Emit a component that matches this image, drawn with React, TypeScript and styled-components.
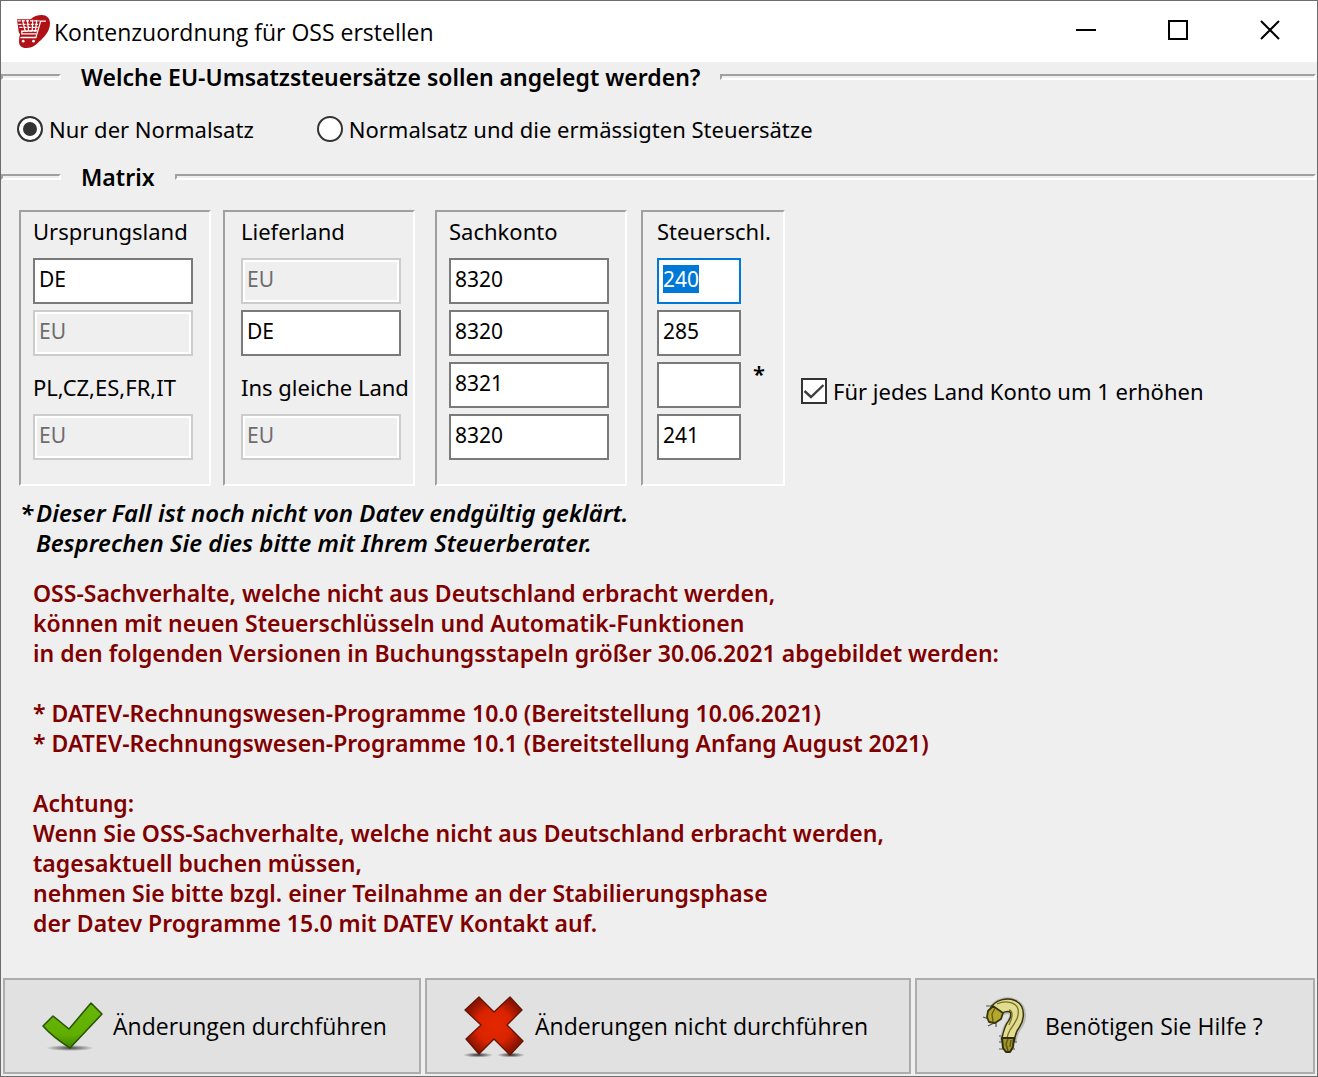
import React, { useEffect, useRef, useState } from 'react';
import styled, { createGlobalStyle } from 'styled-components';

const face = '#efefef';
const shadow = '#a0a0a0';
const uiFont = '"Noto Sans", "Open Sans", sans-serif';
const captionFont = '"Open Sans", "Noto Sans", sans-serif';

const GlobalStyle = createGlobalStyle`
  *, *::before, *::after { box-sizing: border-box; }
  body { margin: 0; background: ${face}; }
  button, input { font: inherit; color: inherit; margin: 0; }
`;

const Window = styled.main`
  display: flex;
  flex-direction: column;
  min-height: 100vh;
  border: 1px solid #6c6c6c;
  background: ${face};
  color: #000;
  font: 400 22px/30px ${uiFont};
`;

const TitleBar = styled.header`
  display: flex;
  align-items: center;
  height: 61px;
  padding: 0 1px 0 16px;
  background: #fff;
`;

const Title = styled.h1`
  flex: 1;
  margin: 0;
  padding-left: 4px;
  font: 400 23px/30px ${captionFont};
  white-space: nowrap;
`;

const CaptionButton = styled.button`
  display: grid;
  place-items: center;
  align-self: flex-start;
  width: 92px;
  height: 58px;
  padding: 0;
  border: 0;
  background: transparent;
`;

const SectionHeader = styled.h2`
  display: flex;
  align-items: center;
  gap: 20px;
  margin: 0;
  padding-right: 1px;
  font: 600 23px/30px ${uiFont};
  white-space: nowrap;

  &::before, &::after {
    content: '';
    height: 6px;
    border: 2px solid;
    border-color: ${shadow} #fff #fff ${shadow};
  }
  &::before { width: 60px; }
  &::after { flex: 1; }
`;

const RadioRow = styled.div`
  display: flex;
  gap: 63px;
  padding: 22px 16px 18px;
`;

const Choice = styled.label`
  display: flex;
  align-items: center;
  gap: 6px;
  white-space: nowrap;
`;

const Radio = styled.input`
  appearance: none;
  width: 26px;
  height: 26px;
  border: 2px solid #333;
  border-radius: 50%;
  background: #fff;
  &:checked { background: #333; box-shadow: inset 0 0 0 4px #fff; }
`;

const TickBox = styled.span`
  display: grid;
  & > * { grid-area: 1 / 1; }
  & > svg { pointer-events: none; visibility: hidden; }
  & > input:checked + svg { visibility: visible; }
`;

const Check = styled.input`
  appearance: none;
  width: 26px;
  height: 26px;
  border: 2px solid #333;
  background: #fff;
`;

const Matrix = styled.div`
  display: flex;
  align-items: flex-end;
  gap: 16px;
  padding: 18px 18px 0;
`;

const Panels = styled.div`
  display: grid;
  grid-template-columns: 204px 212px 206px 144px;
`;

const MatrixOption = styled.div`
  padding-bottom: 80px;
`;

const Panel = styled.div<{ $inset: number; $narrow?: boolean }>`
  display: flex;
  flex-direction: column;
  gap: 6px;
  width: ${p => (p.$narrow ? 144 : 192)}px;
  height: 276px;
  padding: 4px 0 0 ${p => p.$inset}px;
  border: 2px solid;
  border-color: ${shadow} #fff #fff ${shadow};
  white-space: nowrap;
`;

const PanelTitle = styled.div`
  margin-bottom: 6px;
`;

const Cell = styled.div`
  display: flex;
  gap: 12px;
  height: 46px;
`;

const CellText = styled.span`
  padding-top: 10px;
`;

const Star = styled.span`
  font-weight: 600;
  line-height: 22px;
`;

const Field = styled.input<{ $short?: boolean }>`
  width: ${p => (p.$short ? 84 : 160)}px;
  height: 46px;
  padding: 4px 4px 8px;
  border: 2px solid #7a7a7a;
  border-radius: 0;
  outline: 0;
  background: #fff;
  font-size: 21px;
  line-height: 30px;

  &:focus { border-color: #0078d7; }
  &::selection { background: #0078d7; color: #fff; }
  &:disabled {
    border-color: #ccc;
    background: ${face};
    box-shadow: inset 0 0 0 2px #fff;
    color: #6d6d6d;
  }
`;

const Note = styled.p`
  display: grid;
  grid-template-columns: 16px 1fr;
  margin: 12px 0 20px;
  padding-left: 19px;
  font: italic 600 24px/30px ${uiFont};
`;

const Notice = styled.section`
  display: grid;
  gap: 30px;
  padding: 0 32px 40px;
  color: #800000;
  font-weight: 600;
  font-size: 23px;
`;

const Paragraph = styled.p`
  margin: 0;
`;

const Actions = styled.footer`
  display: grid;
  grid-template-columns: 418fr 486fr 400fr;
  gap: 4px;
  margin-top: auto;
  padding: 0 2px 2px;
`;

const Action = styled.button<{ $lead: number }>`
  display: flex;
  align-items: center;
  gap: 10px;
  height: 96px;
  padding: 0 0 0 ${p => p.$lead}px;
  border: 2px solid #adadad;
  background: #e1e1e1;
  font: 400 23px/30px ${captionFont};
  white-space: nowrap;
`;

const CartLogo = () => (
  <svg width="33" height="33" viewBox="0 0 96 96" aria-hidden="true">
    <path fill="#b01116" d="M0 12H40C48 3 60 0 72 0C86 0 96 9 96 24C96 48 78 66 64 78C54 88 44 96 28 96C14 97 6 90 6 78C6 68 7 62 9 56L5 50Z" />
    <g fill="none" stroke="#fff" strokeWidth="3.6">
      <path d="M84 18H69L55 65H12" />
      <path d="M2 17H66M4 27H63M7 36H60M12 47H58" strokeDasharray="9 3" />
      <path d="M16 14L24 48M30 14L34 48M46 14L44 48M58 14L53 48M12 48L58 45M14 47V55H56M10 66H56" />
    </g>
    <circle cx="18" cy="76" r="4" fill="#fff" />
    <circle cx="48" cy="76" r="4" fill="#fff" />
  </svg>
);

const MinimizeIcon = () => (
  <svg width="20" height="20" viewBox="0 0 20 20" aria-hidden="true"><path d="M0 10H20" stroke="#000" strokeWidth="2" /></svg>
);
const MaximizeIcon = () => (
  <svg width="20" height="20" viewBox="0 0 20 20" aria-hidden="true"><path d="M1 1H19V19H1Z" fill="none" stroke="#000" strokeWidth="2" /></svg>
);
const CloseIcon = () => (
  <svg width="20" height="20" viewBox="0 0 20 20" aria-hidden="true"><path d="M1 1L19 19M19 1L1 19" stroke="#000" strokeWidth="2" /></svg>
);
const TickIcon = () => (
  <svg width="26" height="26" viewBox="0 0 26 26" aria-hidden="true"><path d="M3.5 13L10 19L22.5 7" fill="none" stroke="#404040" strokeWidth="2.4" /></svg>
);

const ApplyIcon = () => (
  <svg width="64" height="64" viewBox="0 0 64 64" aria-hidden="true">
    <defs>
      <linearGradient id="green" x1="0" y1="0" x2="0" y2="1"><stop offset="0" stopColor="#68b80a" /><stop offset=".7" stopColor="#5fae00" /><stop offset="1" stopColor="#3f8600" /></linearGradient>
      <radialGradient id="ground"><stop offset="0" stopColor="#000" stopOpacity=".7" /><stop offset="1" stopColor="#000" stopOpacity="0" /></radialGradient>
    </defs>
    <ellipse cx="31" cy="54" rx="24" ry="3" fill="url(#ground)" />
    <path d="M4 32L14 22L30 35L52 9L63 20L31 54C20 47 11 40 4 32Z" fill="url(#green)" stroke="#285207" strokeWidth="1.5" strokeLinejoin="round" />
  </svg>
);

const CancelIcon = () => (
  <svg width="64" height="64" viewBox="0 0 64 64" aria-hidden="true">
    <defs>
      <radialGradient id="red"><stop offset="0" stopColor="#e42800" /><stop offset=".6" stopColor="#d92300" /><stop offset="1" stopColor="#8d1500" /></radialGradient>
      <radialGradient id="foot"><stop offset="0" stopColor="#000" stopOpacity=".8" /><stop offset="1" stopColor="#000" stopOpacity="0" /></radialGradient>
    </defs>
    <ellipse cx="17" cy="61" rx="15" ry="2.5" fill="url(#foot)" />
    <ellipse cx="50" cy="61" rx="14" ry="2.5" fill="url(#foot)" />
    <path d="M18 3L33 18L49 3L61 16L46 31L62 47L49 61L33 45L18 60L5 45L20 31L4 16Z" fill="url(#red)" stroke="#641407" strokeWidth="1.3" strokeLinejoin="round" />
  </svg>
);

const HelpIcon = () => (
  <svg width="64" height="64" viewBox="0 0 64 64" aria-hidden="true">
    <path d="M15 12H21M12 23L18 25M17 32L23 29M25 33V28M28 42H45M28 48H46M28 55H44" stroke="#555" strokeWidth="1.2" />
    <g fill="none">
      <path d="M26 17C29 12 37 10 42 13C49 17 47 26 43 31C39 36 38 41 37 48" stroke="#8f8f8f" strokeWidth="17" opacity=".45" />
      <path d="M25 17C28 12 36 10 41 12C48 15 47 24 43 30C39 35 38 40 37 47" stroke="#38350e" strokeWidth="14" />
      <path d="M25 17C28 12 36 10 41 12C48 15 47 24 43 30C39 35 38 40 37 46" stroke="#e2dc91" strokeWidth="11" />
      <path d="M26 10C34 6 45 8 47 15C49 24 42 31 39 36C37 40 36 42 36 45M38 16C43 17 41 25 38 31" stroke="#77722a" strokeWidth="1.3" />
    </g>
    <path d="M17 17L22 12L32 19L30 25L24 29L18 28L16 23Z" fill="#b3a82c" stroke="#38350e" strokeWidth="1.8" strokeLinejoin="round" />
    <path d="M24 14L21 20L22 28" fill="none" stroke="#665f13" strokeWidth="1.4" />
    <path d="M31 44H43L42 53L39 58H35L32 54Z" fill="#a0962a" stroke="#302d0b" strokeWidth="2" strokeLinejoin="round" />
    <path d="M37 45L35 50L37 57M40 46L39 53" fill="none" stroke="#5c5613" strokeWidth="1.4" />
  </svg>
);

type CellData = { value: string; kind?: 'disabled' | 'text' | 'active'; star?: boolean };
type Column = { title: string; inset: number; narrow?: boolean; cells: CellData[] };

const columns: Column[] = [
  { title: 'Ursprungsland', inset: 12, cells: [{ value: 'DE' }, { value: 'EU', kind: 'disabled' }, { value: 'PL,CZ,ES,FR,IT', kind: 'text' }, { value: 'EU', kind: 'disabled' }] },
  { title: 'Lieferland', inset: 16, cells: [{ value: 'EU', kind: 'disabled' }, { value: 'DE' }, { value: 'Ins gleiche Land', kind: 'text' }, { value: 'EU', kind: 'disabled' }] },
  { title: 'Sachkonto', inset: 12, cells: [{ value: '8320' }, { value: '8320' }, { value: '8321' }, { value: '8320' }] },
  { title: 'Steuerschl.', inset: 14, narrow: true, cells: [{ value: '240', kind: 'active' }, { value: '285' }, { value: '', star: true }, { value: '241' }] },
];

const notice = [
  ['OSS-Sachverhalte, welche nicht aus Deutschland erbracht werden,', 'können mit neuen Steuerschlüsseln und Automatik-Funktionen', 'in den folgenden Versionen in Buchungsstapeln größer 30.06.2021 abgebildet werden:'],
  ['* DATEV-Rechnungswesen-Programme 10.0 (Bereitstellung 10.06.2021)', '* DATEV-Rechnungswesen-Programme 10.1 (Bereitstellung Anfang August 2021)'],
  ['Achtung:', 'Wenn Sie OSS-Sachverhalte, welche nicht aus Deutschland erbracht werden,', 'tagesaktuell buchen müssen,', 'nehmen Sie bitte bzgl. einer Teilnahme an der Stabilierungsphase', 'der Datev Programme 15.0 mit DATEV Kontakt auf.'],
];

export default function App() {
  const active = useRef<HTMLInputElement>(null);
  const [rates, setRates] = useState('normal');

  useEffect(() => {
    active.current?.focus();
    active.current?.select();
  }, []);

  return (
    <Window>
      <GlobalStyle />
      <TitleBar>
        <CartLogo />
        <Title>Kontenzuordnung für OSS erstellen</Title>
        <CaptionButton type="button" aria-label="Minimieren"><MinimizeIcon /></CaptionButton>
        <CaptionButton type="button" aria-label="Maximieren"><MaximizeIcon /></CaptionButton>
        <CaptionButton type="button" aria-label="Schließen"><CloseIcon /></CaptionButton>
      </TitleBar>

      <SectionHeader>Welche EU-Umsatzsteuersätze sollen angelegt werden?</SectionHeader>
      <RadioRow>
        <Choice>
          <Radio type="radio" name="rates" checked={rates === 'normal'} onChange={() => setRates('normal')} />
          Nur der Normalsatz
        </Choice>
        <Choice>
          <Radio type="radio" name="rates" checked={rates === 'all'} onChange={() => setRates('all')} />
          Normalsatz und die ermässigten Steuersätze
        </Choice>
      </RadioRow>

      <SectionHeader>Matrix</SectionHeader>
      <Matrix>
        <Panels>
          {columns.map(col => (
            <Panel key={col.title} $inset={col.inset} $narrow={col.narrow}>
              <PanelTitle>{col.title}</PanelTitle>
              {col.cells.map((cell, i) => (
                <Cell key={i}>
                  {cell.kind === 'text' ? (
                    <CellText>{cell.value}</CellText>
                  ) : (
                    <Field
                      ref={cell.kind === 'active' ? active : undefined}
                      $short={col.narrow}
                      aria-label={`${col.title} ${i + 1}`}
                      defaultValue={cell.value}
                      disabled={cell.kind === 'disabled'}
                    />
                  )}
                  {cell.star && <Star>*</Star>}
                </Cell>
              ))}
            </Panel>
          ))}
        </Panels>
        <MatrixOption>
          <Choice>
            <TickBox><Check type="checkbox" defaultChecked /><TickIcon /></TickBox>
            Für jedes Land Konto um 1 erhöhen
          </Choice>
        </MatrixOption>
      </Matrix>

      <Note>
        <span>*</span>
        <span>Dieser Fall ist noch nicht von Datev endgültig geklärt.<br />Besprechen Sie dies bitte mit Ihrem Steuerberater.</span>
      </Note>

      <Notice>
        {notice.map(lines => (
          <Paragraph key={lines[0]}>
            {lines.map(line => <React.Fragment key={line}>{line}<br /></React.Fragment>)}
          </Paragraph>
        ))}
      </Notice>

      <Actions>
        <Action type="button" $lead={34}><ApplyIcon />Änderungen durchführen</Action>
        <Action type="button" $lead={34}><CancelIcon />Änderungen nicht durchführen</Action>
        <Action type="button" $lead={54}><HelpIcon />Benötigen Sie Hilfe ?</Action>
      </Actions>
    </Window>
  );
}
